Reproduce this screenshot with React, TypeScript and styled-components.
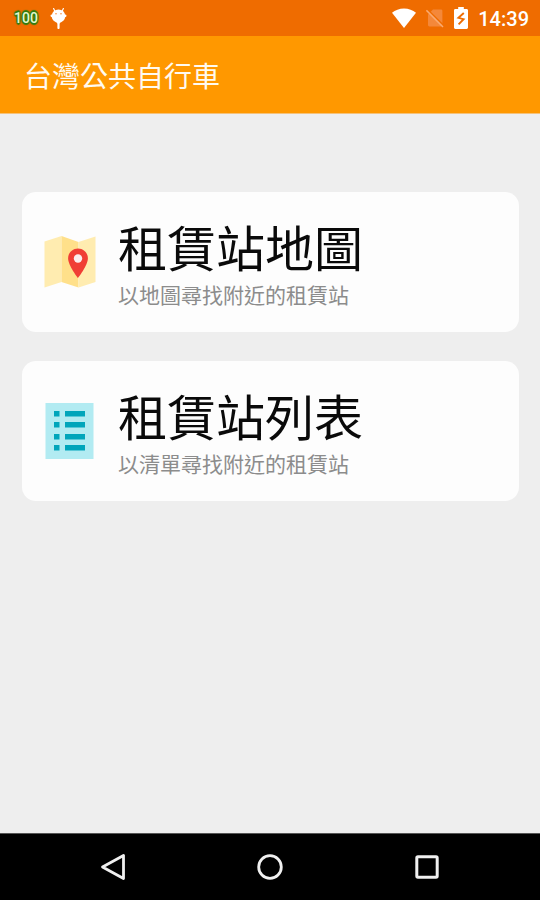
import React from "react";
import styled, { createGlobalStyle } from "styled-components";

const GlobalStyle = createGlobalStyle`
  *, *::before, *::after { box-sizing: border-box; }
  body {
    margin: 0;
    background: #eeeeee;
    font-family: Roboto, "Noto Sans CJK TC", sans-serif;
  }
`;

const Screen = styled.div`
  display: flex;
  flex-direction: column;
  min-height: 100vh;
`;

const StatusBar = styled.div`
  display: flex;
  align-items: center;
  justify-content: space-between;
  height: 36px;
  padding: 0 11px 0 14px;
  background: #ef6c00;
  color: #ffffff;
`;

const StatusGroup = styled.div<{ $gap: number }>`
  display: flex;
  align-items: center;
  gap: ${(p) => p.$gap}px;
`;

const Clock = styled.time`
  padding-top: 2px;
  font-size: 20px;
  line-height: 24px;
  font-weight: 500;
`;

const BatteryPercent = styled.span`
  color: #e4f7cf;
  font-family: Roboto, sans-serif;
  font-size: 14px;
  line-height: 24px;
  font-weight: 500;
  text-shadow: 1px 1px 1px #2f7d10, -1px -1px 1px #2f7d10, 1px -1px 1px #2f7d10,
    -1px 1px 1px #2f7d10, 0 2px 1px #2f7d10, 0 -2px 1px #2f7d10;
`;

const AppBar = styled.header`
  display: flex;
  align-items: center;
  height: 78px;
  padding: 6px 24px 0;
  background: #ff9800;
  border-bottom: 1px solid #f5c27a;
`;

const AppTitle = styled.h1`
  margin: 0;
  color: #fffaf0;
  font-size: 28px;
  line-height: 40px;
  font-weight: 400;
`;

const Main = styled.main`
  display: flex;
  flex: 1;
  flex-direction: column;
  gap: 29px;
  padding: 78px 21px 28px 22px;
`;

const Card = styled.button`
  display: flex;
  align-items: center;
  gap: 22px;
  width: 100%;
  min-height: 140px;
  padding: 20px 22px;
  border: 0;
  border-radius: 14px;
  background: #fdfdfd;
  font-family: inherit;
  text-align: left;
  cursor: pointer;
`;

const CardText = styled.span`
  display: flex;
  flex-direction: column;
  gap: 3px;
  padding-top: 9px;
`;

const CardTitle = styled.span`
  color: #0a0a0a;
  font-size: 49px;
  line-height: 56px;
`;

const CardHint = styled.span`
  color: #8c8c8c;
  font-size: 21px;
  line-height: 28px;
`;

const NavBar = styled.nav`
  display: grid;
  grid-template-columns: repeat(3, 1fr);
  height: 67px;
  padding: 0 34px;
  border-top: 1px solid #555555;
  background: #000000;
`;

const NavButton = styled.button`
  display: flex;
  align-items: center;
  justify-content: center;
  padding: 0;
  border: 0;
  background: none;
  cursor: pointer;
`;

const DroidIcon = () => (
  <svg width="17" height="24" viewBox="0 0 17 24" aria-hidden="true">
    <path d="M4.800 5 3.600 2.600M12.200 5 13.400 2.600" stroke="#fff" strokeWidth="1.200" strokeLinecap="round" />
    <ellipse cx="8.500" cy="10" rx="6.800" ry="6.600" fill="#fff" />
    <circle cx="1.900" cy="9.800" r="1.400" fill="#fff" />
    <circle cx="15.100" cy="9.800" r="1.400" fill="#fff" />
    <path d="M6 15.500h5l-1.400 2.200V22c0 .6-.5 1-1.100 1s-1.100-.4-1.100-1v-4.300z" fill="#fff" />
    <circle cx="6" cy="7.800" r=".8" fill="#f58a3a" />
    <circle cx="11" cy="7.800" r=".8" fill="#f58a3a" />
  </svg>
);

const WifiIcon = () => (
  <svg width="24" height="20" viewBox="0 0 24 20" aria-hidden="true">
    <path fill="#fff" d="M12 20 0 4.800C3.200 2 7.300.4 12 .4S20.800 2 24 4.800z" />
  </svg>
);

const NoSimIcon = () => (
  <svg width="18" height="20" viewBox="0 0 18 20" aria-hidden="true">
    <path
      fill="#f4883a"
      d="M7 1.500h8c.8 0 1.400.6 1.400 1.400v14.200c0 .8-.6 1.400-1.400 1.400H3.400c-.8 0-1.400-.6-1.400-1.400V6.500z"
    />
    <path d="M1.200 1.200 17.800 17.800" stroke="#ef6c00" strokeWidth="1.600" />
    <path d="M.4 2.400 17 19" stroke="#f9ab72" strokeWidth="1.500" />
  </svg>
);

const BatteryIcon = () => (
  <svg width="14" height="22" viewBox="0 0 14 22" aria-hidden="true">
    <path
      fill="#fff"
      d="M4.200 0h5.600v2H12.600c.8 0 1.400.6 1.400 1.400v17.200c0 .8-.6 1.400-1.400 1.400H1.400C.6 22 0 21.400 0 20.600V3.400C0 2.600.6 2 1.400 2h2.800z"
    />
    <path
      fill="none"
      stroke="#ef6c00"
      strokeWidth="1.900"
      d="M9.800 6 4.400 10.800 9.600 12.200 4.600 17.400"
    />
  </svg>
);

const MapIcon = () => (
  <svg width="52" height="52" viewBox="0 0 52 52" aria-hidden="true">
    <path fill="#ffecb0" d="M.5 5.500 17.500 0V46L.5 51.500z" />
    <path fill="#ffe08a" d="M17.500 0 34.500 6V51.500L17.500 46z" />
    <path fill="#ffecb0" d="M34.500 6 51.500.5V46L34.500 51.500z" />
    <path fill="#f03e35" d="M34 12.500c-5.500 0-9.900 4.300-9.900 9.700C24.100 29.500 34 42 34 42s9.900-12.500 9.900-19.800c0-5.400-4.400-9.700-9.900-9.700z" />
    <circle cx="34" cy="22.500" r="4.200" fill="#fbeeee" />
  </svg>
);

const listRows = [9, 20, 32, 43];

const ListIcon = () => (
  <svg width="52" height="58" viewBox="0 0 52 58" aria-hidden="true">
    <rect x="1.500" y="1" width="48" height="56" fill="#b2ebf2" />
    {listRows.map((y) => (
      <g key={y} fill="#00a5bb">
        <rect x="10" y={y} width="5.500" height="5.500" />
        <rect x="21" y={y} width="20" height="5.500" />
      </g>
    ))}
  </svg>
);

const BackIcon = () => (
  <svg width="28" height="28" viewBox="0 0 28 28" aria-hidden="true">
    <path d="M3.500 14 24.500 2.500V25.500z" fill="none" stroke="#f0f0f0" strokeWidth="2.800" strokeLinejoin="round" />
  </svg>
);

const HomeIcon = () => (
  <svg width="28" height="28" viewBox="0 0 28 28" aria-hidden="true">
    <circle cx="14" cy="14" r="11.300" fill="none" stroke="#f0f0f0" strokeWidth="2.800" />
  </svg>
);

const RecentIcon = () => (
  <svg width="28" height="28" viewBox="0 0 28 28" aria-hidden="true">
    <rect x="3.800" y="3.800" width="20.400" height="20.400" rx="1.200" fill="none" stroke="#f0f0f0" strokeWidth="3" />
  </svg>
);

const entries = [
  { title: "租賃站地圖", hint: "以地圖尋找附近的租賃站", Icon: MapIcon },
  { title: "租賃站列表", hint: "以清單尋找附近的租賃站", Icon: ListIcon },
];

const navItems = [
  { label: "返回", Icon: BackIcon },
  { label: "主畫面", Icon: HomeIcon },
  { label: "最近使用", Icon: RecentIcon },
];

export default function App() {
  return (
    <Screen lang="zh-Hant">
      <GlobalStyle />
      <StatusBar>
        <StatusGroup $gap={12}>
          <BatteryPercent>100</BatteryPercent>
          <DroidIcon />
        </StatusGroup>
        <StatusGroup $gap={10}>
          <WifiIcon />
          <NoSimIcon />
          <BatteryIcon />
          <Clock>14:39</Clock>
        </StatusGroup>
      </StatusBar>
      <AppBar>
        <AppTitle>台灣公共自行車</AppTitle>
      </AppBar>
      <Main>
        {entries.map(({ title, hint, Icon }) => (
          <Card key={title} type="button">
            <Icon />
            <CardText>
              <CardTitle>{title}</CardTitle>
              <CardHint>{hint}</CardHint>
            </CardText>
          </Card>
        ))}
      </Main>
      <NavBar>
        {navItems.map(({ label, Icon }) => (
          <NavButton key={label} type="button" aria-label={label}>
            <Icon />
          </NavButton>
        ))}
      </NavBar>
    </Screen>
  );
}
